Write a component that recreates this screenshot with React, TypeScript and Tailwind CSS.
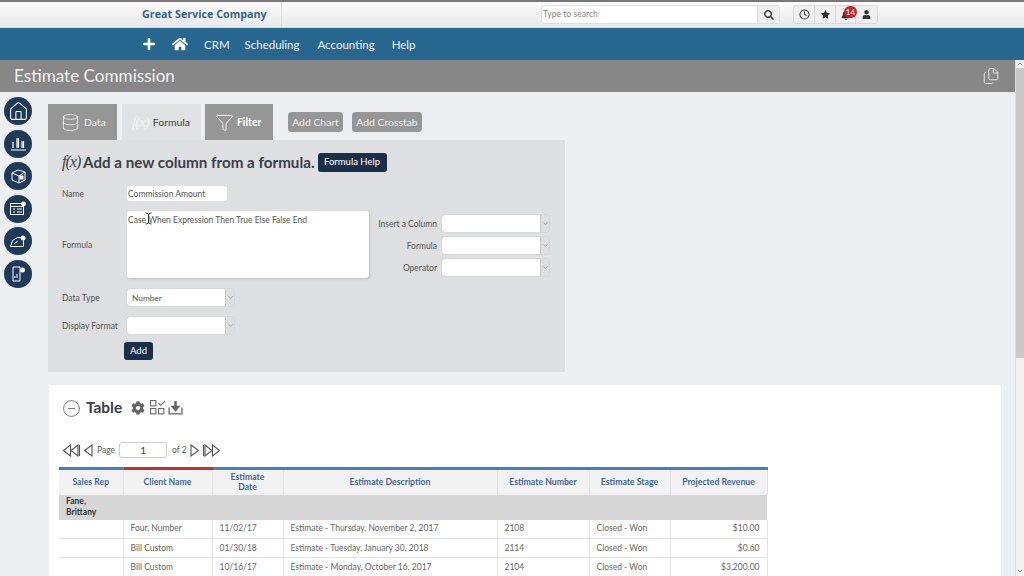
import React from "react";
import { FaPlus, FaHome, FaSearch, FaStar, FaBell, FaUser, FaCog } from "react-icons/fa";
import { Clock, Home, Database, Funnel, Files, CircleMinus, TextCursor, ChevronDown, ChevronUp } from "lucide-react";

const Circle = ({ children }: { children: React.ReactNode }) => (
  <div className="w-[28px] h-[28px] rounded-full bg-[#1e3a5b] flex items-center justify-center text-white shrink-0">{children}</div>
);

const s = { fill: "none", stroke: "currentColor", strokeWidth: 1 } as const;

const SideIcons = [
  <Home key="h" size={21} strokeWidth={1.2} />,
  <svg key="c" width="17" height="17" viewBox="0 0 17 17" {...s}><path d="M1 15h15" /><path d="M3 13V7M7 13V3M8.5 13V3M12 13V6M13.5 13V6" strokeWidth="1.2" /></svg>,
  <svg key="b" width="17" height="17" viewBox="0 0 17 17" {...s}><path d="M2 5l6-3 7 2v8l-6 3-7-3z" /><path d="M2 5l7 3v7M9 8l6-4" /><rect x="10" y="8" width="3" height="3" fill="currentColor" /></svg>,
  <svg key="f" width="18" height="17" viewBox="0 0 18 17" {...s}><rect x="1.5" y="3.5" width="13" height="11" /><path d="M1.5 6.5h13M4 9h2M8 9h5M4 12h2M8 12h5" /><circle cx="14.5" cy="4" r="2.4" fill="currentColor" stroke="none" /></svg>,
  <svg key="g" width="18" height="17" viewBox="0 0 18 17" {...s}><path d="M1.5 13.5l2-6 5-3h4l2 3v6z" /><path d="M5 11l4-3" /><circle cx="14" cy="5" r="2.5" fill="currentColor" stroke="none" /></svg>,
  <svg key="d" width="17" height="18" viewBox="0 0 17 18" {...s}><path d="M3 2h7v14H3z" /><path d="M5 13v-2M7 13V9" /><circle cx="12.5" cy="5" r="2.5" fill="currentColor" stroke="none" /></svg>,
];

const Select = ({ value = "", w = "w-[107px]" }: { value?: string; w?: string }) => (
  <div className={`${w} h-[17px] bg-white rounded-[3px] flex items-center justify-between shadow-[0_0_1px_#999] overflow-hidden`}>
    <span className="pl-[5px] pt-[1px] text-[8.3px] text-[#555]">{value}</span>
    <div className="w-[9px] h-full bg-[#dedede] border-l border-[#c8c8c8] flex items-center justify-center text-[#777]"><ChevronDown size={7} /></div>
  </div>
);

const Tri = ({ dir, dbl, bar }: { dir: "l" | "r"; dbl?: boolean; bar?: boolean }) => (
  <svg width={dbl ? 19 : 10} height="13" viewBox={dbl ? "0 0 19 13" : "0 0 10 13"} fill="none" stroke="#555" strokeWidth="1.1" className={dir === "r" ? "scale-x-[-1]" : ""}>
    {dbl ? (<><path d="M8.5 1L1.5 6.5l7 5.5z" /><path d="M16 1L9 6.5l7 5.5z" />{bar && <path d="M17.5 1v11" />}</>) : <path d="M9 1L1.5 6.5 9 12z" />}
  </svg>
);

const cols = ["w-[64px]", "w-[89px]", "w-[71px]", "w-[214px]", "w-[92px]", "w-[81px]", "w-[97px]"];
const heads: [React.ReactNode, string][] = [
  ["Sales Rep", "border-[#3f7fcb]"],
  ["Client Name", "border-[#c0302f]"],
  [<>Estimate<br />Date</>, "border-[#3f7fcb]"],
  ["Estimate Description", "border-[#3f7fcb]"],
  ["Estimate Number", "border-[#3f7fcb]"],
  ["Estimate Stage", "border-[#3f7fcb]"],
  ["Projected Revenue", "border-[#3f7fcb]"],
];
const rows = [
  ["", "Four, Number", "11/02/17", "Estimate - Thursday, November 2, 2017", "2108", "Closed - Won", "$10.00"],
  ["", "Bill Custom", "01/30/18", "Estimate - Tuesday, January 30, 2018", "2114", "Closed - Won", "$0.60"],
  ["", "Bill Custom", "10/16/17", "Estimate - Monday, October 16, 2017", "2104", "Closed - Won", "$3,200.00"],
];

export default function App() {
  return (
    <div className="w-[1024px] h-[576px] overflow-hidden bg-[#eceeef] font-['Lato','Open_Sans',sans-serif] flex flex-col relative">
      {/* top bar */}
      <div className="h-[28px] shrink-0 border-t-[2px] border-b border-t-[#777] border-b-[#d5d5d5] bg-gradient-to-b from-[#fafafa] to-[#e9e9e9] flex items-center">
        <div className="w-[282px] h-full border-r border-[#ddd] pl-[142px] flex items-center">
          <span className="font-['Open_Sans',sans-serif] font-bold text-[10.75px] text-[#2f6690] whitespace-nowrap">Great Service Company</span>
        </div>
        <div className="ml-[259px] w-[239px] h-[19px] bg-white border border-[#ddd] rounded-[3px] flex items-center">
          <span className="flex-1 pl-[1px] text-[8.6px] text-[#888]">Type to search</span>
          <div className="w-[22px] h-full bg-[#eee] border-l border-[#ddd] flex items-center justify-center text-[#444] rounded-r-[3px]"><FaSearch size={10} /></div>
        </div>
        <div className="ml-[13px] h-[19px] w-[85px] flex border border-[#d8d8d8] rounded-[3px] bg-[#f0f0f0] text-[#333] relative">
          <div className="w-[21px] flex items-center justify-center border-r border-[#d8d8d8]"><Clock size={11} strokeWidth={2.2} /></div>
          <div className="w-[21px] flex items-center justify-center border-r border-[#d8d8d8]"><FaStar size={9} /></div>
          <div className="w-[20px] flex items-center justify-center border-r border-[#d8d8d8]"><FaBell size={10} /></div>
          <div className="flex-1 flex items-center justify-center"><FaUser size={9} /></div>
          <div className="absolute left-[50px] top-[0px] w-[13px] h-[12px] rounded-full bg-[#c9252b] text-white text-[8px] leading-[12px] text-center">14</div>
        </div>
      </div>

      {/* nav */}
      <div className="h-[32px] shrink-0 bg-[#27668f] flex items-center pl-[142px] text-white text-[11.5px]">
        <FaPlus size={14} />
        <FaHome size={16} className="ml-[16px]" />
        <div className="flex items-center pt-[2px]">
          <span className="ml-[16px] text-[#eef3f7]">CRM</span>
          <span className="ml-[15px] text-[#eef3f7]">Scheduling</span>
          <span className="ml-[18px] text-[#eef3f7]">Accounting</span>
          <span className="ml-[17px] text-[#eef3f7]">Help</span>
        </div>
      </div>

      {/* title */}
      <div className="h-[32px] shrink-0 bg-[#888787] flex items-center justify-between pl-[14px] pr-[24px] text-[#f4f4f4]">
        <span className="text-[17.1px]">Estimate Commission</span>
        <Files size={18} strokeWidth={1.1} />
      </div>

      {/* body */}
      <div className="flex flex-1 min-h-0">
        <div className="w-[48px] shrink-0 pl-[4px] pt-[5px] flex flex-col gap-[4.5px]">
          {SideIcons.map((ic, i) => <Circle key={i}>{ic}</Circle>)}
        </div>
        <div className="flex-1 min-w-0 pt-[12px]">
          {/* tabs */}
          <div className="flex items-end h-[36px] text-[10.4px]">
            <div className="w-[69px] h-[36px] bg-[#969696] flex items-center pl-[13px] gap-[4px] text-[#f2f2f2]">
              <Database size={19} strokeWidth={1.1} /><span className="pt-[1px]">Data</span>
            </div>
            <div className="ml-[5px] w-[79px] h-[36px] bg-[#dfe1e3] flex items-center pl-[10px] gap-[4px] text-[#444]">
              <span className="font-['Liberation_Serif',serif] italic text-[15px] tracking-[-1px] text-[#f2f3f4] whitespace-nowrap">f(x)</span><span className="pt-[1px]">Formula</span>
            </div>
            <div className="ml-[4px] w-[68px] h-[36px] bg-[#969696] flex items-center pl-[10px] gap-[3px] text-white font-bold">
              <Funnel size={19} strokeWidth={1.1} /><span className="pt-[1px]">Filter</span>
            </div>
            <div className="self-center ml-[15px] w-[55px] h-[20px] pt-[1px] rounded-[4px] bg-[#969696] text-[#f2f2f2] flex items-center justify-center">Add Chart</div>
            <div className="self-center ml-[9px] w-[70px] h-[20px] pt-[1px] rounded-[4px] bg-[#969696] text-[#f2f2f2] flex items-center justify-center">Add Crosstab</div>
          </div>

          {/* panel */}
          <div className="w-[517px] h-[232px] bg-[#dddfe1] pl-[14px] pt-[12px] text-[8.5px] text-[#555]">
            <div className="flex items-center h-[22px] -mt-[1px]">
              <span className="font-['Liberation_Serif',serif] italic text-[16px] tracking-[-1px] text-[#444] w-[21px] whitespace-nowrap">f(x)</span>
              <span className="pt-[1px] text-[15.2px] font-bold text-[#3b4049] whitespace-nowrap">Add a new column from a formula.</span>
              <span className="ml-[3px] w-[69px] h-[19px] bg-[#1a2f48] text-white rounded-[3px] flex items-center justify-center text-[9.5px]">Formula Help</span>
            </div>
            <div className="flex items-center mt-[13px] h-[15px]">
              <span className="w-[65px] pt-[1px]">Name</span>
              <div className="w-[100px] h-[15px] bg-white rounded-[3px] pl-[1px] pt-[1px] leading-[15px]">Commission Amount</div>
            </div>
            <div className="flex mt-[10px]">
              <span className="w-[65px] self-center pt-[2px]">Formula</span>
              <div className="w-[242px] h-[67px] bg-white rounded-[3px] pl-[1px] pt-[3px] shadow-[1px_1px_2px_#bbb] relative">
                Case When Expression Then True Else False End
                <TextCursor size={13} strokeWidth={1.6} className="absolute left-[15px] top-[1px] text-[#222]" />
              </div>
              <div className="ml-[9px] pt-[4px] flex flex-col gap-[5px]">
                {["Insert a Column", "Formula", "Operator"].map((l) => (
                  <div key={l} className="flex items-center h-[17px]">
                    <span className="w-[59px] pt-[1px] text-right mr-[5px] whitespace-nowrap">{l}</span>
                    <Select />
                  </div>
                ))}
              </div>
            </div>
            <div className="flex items-center mt-[11px] h-[17px]">
              <span className="w-[65px] pt-[1px]">Data Type</span>
              <Select value="Number" />
            </div>
            <div className="flex items-center mt-[11px] h-[17px]">
              <span className="w-[65px] pt-[1px] whitespace-nowrap">Display Format</span>
              <Select />
            </div>
            <div className="mt-[8px] ml-[62px] w-[29px] h-[18px] bg-[#1a2f48] text-white rounded-[3px] flex items-center justify-center text-[9.5px]">Add</div>
          </div>

          {/* table card */}
          <div className="mt-[13px] ml-px w-[952px] h-[191px] bg-white pl-[10px] overflow-hidden">
            <div className="flex items-center h-[18px] mt-[14px] pl-[3px] text-[#666]">
              <CircleMinus size={19} strokeWidth={1.1} />
              <span className="ml-[5px] text-[15.4px] font-bold text-[#3b4049]">Table</span>
              <FaCog size={14} className="ml-[9px] -mt-[1px]" />
              <svg width="16" height="15" viewBox="0 0 15 14" fill="none" stroke="currentColor" className="ml-[5px] -mt-[1px]" strokeWidth="1"><rect x="0.5" y="0.5" width="5" height="5" /><rect x="0.5" y="8" width="5" height="5" /><rect x="8" y="8" width="5" height="5" /><path d="M8 3l2 2 4-4" /></svg>
              <svg width="15" height="15" viewBox="0 0 14 14" fill="none" stroke="currentColor" className="ml-[2px] -mt-[1px]" strokeWidth="1.2"><path d="M1 7v6h12V7" /><path d="M7 1v7" strokeWidth="2.4" /><path d="M3.5 6L7 10l3.5-4z" fill="currentColor" /></svg>
            </div>
            <div className="flex items-center h-[18px] mt-[24px] pl-[3px] text-[8.5px] text-[#555]">
              <Tri dir="l" dbl bar />
              <span className="ml-[2px]"><Tri dir="l" /></span>
              <span className="ml-[4px]">Page</span>
              <div className="ml-[4px] w-[48px] h-[16px] border border-[#ccc] rounded-[3px] text-center text-[10px] leading-[14px] text-[#345]">1</div>
              <span className="ml-[5px]">of 2</span>
              <span className="ml-[3px]"><Tri dir="r" /></span>
              <span className="ml-[2px]"><Tri dir="r" dbl bar /></span>
            </div>
            <table className="mt-[8px] table-fixed border-collapse w-[708px] text-[8.5px] text-[#666]">
              <colgroup>{cols.map((c, i) => <col key={i} className={c} />)}</colgroup>
              <thead>
                <tr className="h-[26px] bg-[#f2f2f2]">
                  {heads.map(([h, b], i) => (
                    <th key={i} className={`border-t-[3px] ${b} border-r border-r-[#e2e2e2] px-[6px] font-bold text-[#3d69a3] text-center text-[8.7px] leading-[10px] p-0`}>{h}</th>
                  ))}
                </tr>
              </thead>
              <tbody>
                <tr className="h-[25px] bg-[#d6d6d6]">
                  <td className="pl-[7px] font-bold text-[#333] leading-[11px]">Fane,<br />Brittany</td>
                  {[1, 2, 3, 4, 5, 6].map((i) => <td key={i} />)}
                </tr>
                {rows.map((r, i) => (
                  <tr key={i} className="h-[19px] border-b border-[#e2e2e2]">
                    {r.map((c, j) => (
                      <td key={j} className={`px-[7px] border-r border-[#e2e2e2] whitespace-nowrap ${j === 6 ? "text-right" : ""}`}>{c}</td>
                    ))}
                  </tr>
                ))}
              </tbody>
            </table>
          </div>
        </div>
      </div>

      {/* scrollbar */}
      <div className="absolute right-0 top-[60px] bottom-0 w-[9px] bg-[#f1f1f1] border-l border-[#dcdcdc] flex flex-col items-center">
        <ChevronUp size={8} className="text-[#666] shrink-0" />
        <div className="w-full h-[290px] bg-[#c8c8c8]" />
        <ChevronDown size={8} className="text-[#666] shrink-0 mt-auto mb-[1px]" />
      </div>
    </div>
  );
}
